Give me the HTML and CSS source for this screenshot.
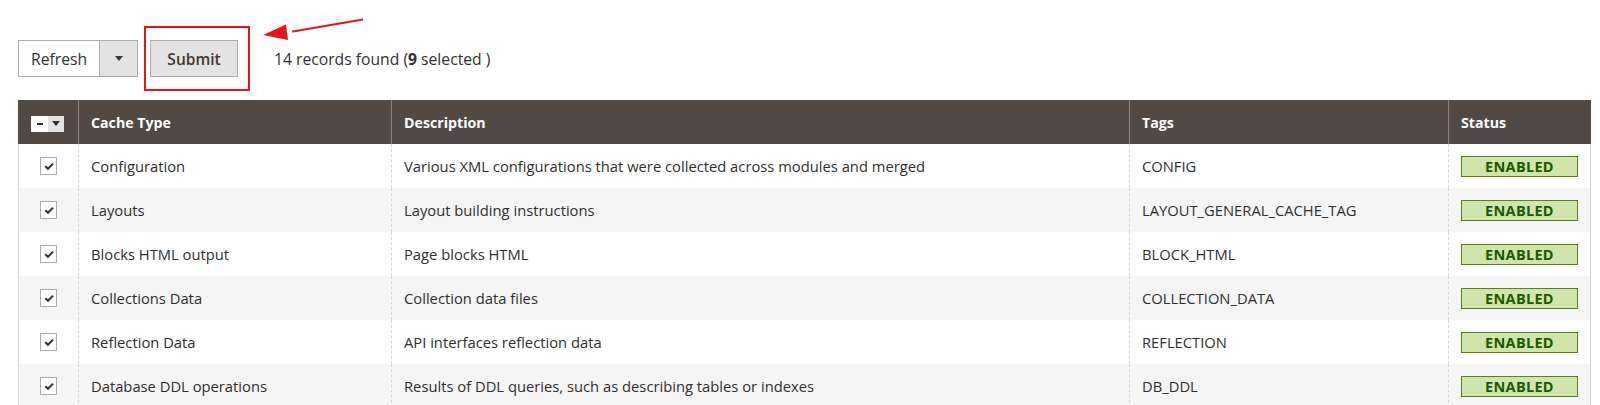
FILE: index.html
```html
<!DOCTYPE html>
<html>
<head>
<meta charset="utf-8">
<link rel="stylesheet" href="styles.css">
</head>
<body>
<div class="page">
  <div class="toolbar">
    <div class="action-select">
      <span class="action-label">Refresh</span>
      <span class="action-toggle"><span class="tri"></span></span>
    </div>
    <div class="submit-wrap">
      <button class="btn-submit">Submit</button>
      <span class="highlight"></span>
      <svg class="arrow" width="100" height="30" viewBox="0 0 100 30">
        <line x1="100" y1="1.5" x2="30" y2="13.5" stroke="#e8141c" stroke-width="2.2" stroke-linecap="round"/>
        <polygon points="0,17 23,6.5 25,22" fill="#e8141c"/>
      </svg>
    </div>
    <div class="records">14 records found (<b>9</b> selected )</div>
  </div>

  <table class="grid">
    <colgroup>
      <col class="c-check"><col class="c-type"><col class="c-desc"><col class="c-tags"><col class="c-status">
    </colgroup>
    <thead>
      <tr>
        <th class="th-check"><span class="mass"><span class="mass-box"><span class="dash"></span></span><span class="mass-toggle"><span class="tri"></span></span></span></th>
        <th>Cache Type</th>
        <th>Description</th>
        <th>Tags</th>
        <th>Status</th>
      </tr>
    </thead>
    <tbody>
      <tr>
        <td class="td-check"><span class="cb"><svg viewBox="0 0 12 12" width="12" height="12"><path d="M2.3 6.2 L5 8.8 L10 3.6" fill="none" stroke="#333" stroke-width="2"/></svg></span></td>
        <td>Configuration</td>
        <td>Various XML configurations that were collected across modules and merged</td>
        <td>CONFIG</td>
        <td><span class="badge">ENABLED</span></td>
      </tr>
      <tr>
        <td class="td-check"><span class="cb"><svg viewBox="0 0 12 12" width="12" height="12"><path d="M2.3 6.2 L5 8.8 L10 3.6" fill="none" stroke="#333" stroke-width="2"/></svg></span></td>
        <td>Layouts</td>
        <td>Layout building instructions</td>
        <td>LAYOUT_GENERAL_CACHE_TAG</td>
        <td><span class="badge">ENABLED</span></td>
      </tr>
      <tr>
        <td class="td-check"><span class="cb"><svg viewBox="0 0 12 12" width="12" height="12"><path d="M2.3 6.2 L5 8.8 L10 3.6" fill="none" stroke="#333" stroke-width="2"/></svg></span></td>
        <td>Blocks HTML output</td>
        <td>Page blocks HTML</td>
        <td>BLOCK_HTML</td>
        <td><span class="badge">ENABLED</span></td>
      </tr>
      <tr>
        <td class="td-check"><span class="cb"><svg viewBox="0 0 12 12" width="12" height="12"><path d="M2.3 6.2 L5 8.8 L10 3.6" fill="none" stroke="#333" stroke-width="2"/></svg></span></td>
        <td>Collections Data</td>
        <td>Collection data files</td>
        <td>COLLECTION_DATA</td>
        <td><span class="badge">ENABLED</span></td>
      </tr>
      <tr>
        <td class="td-check"><span class="cb"><svg viewBox="0 0 12 12" width="12" height="12"><path d="M2.3 6.2 L5 8.8 L10 3.6" fill="none" stroke="#333" stroke-width="2"/></svg></span></td>
        <td>Reflection Data</td>
        <td>API interfaces reflection data</td>
        <td>REFLECTION</td>
        <td><span class="badge">ENABLED</span></td>
      </tr>
      <tr>
        <td class="td-check"><span class="cb"><svg viewBox="0 0 12 12" width="12" height="12"><path d="M2.3 6.2 L5 8.8 L10 3.6" fill="none" stroke="#333" stroke-width="2"/></svg></span></td>
        <td>Database DDL operations</td>
        <td>Results of DDL queries, such as describing tables or indexes</td>
        <td>DB_DDL</td>
        <td><span class="badge">ENABLED</span></td>
      </tr>
    </tbody>
  </table>
</div>
</body>
</html>
```

FILE: styles.css
```css
html, body {
  margin: 0;
  padding: 0;
  background: #ffffff;
}
body {
  font-family: "Open Sans", "Liberation Sans", sans-serif;
  font-size: 14px;
  color: #303030;
  overflow: hidden;
}
.page {
  padding: 40px 10px 0 18px;
}
.toolbar {
  display: flex;
  align-items: center;
  height: 37px;
}
.action-select {
  display: flex;
  box-sizing: border-box;
  width: 120px;
  height: 37px;
  border: 1px solid #adadad;
  background: #fff;
}
.action-label {
  flex: 1;
  display: flex;
  align-items: center;
  padding-left: 12px;
  font-size: 15.7px;
  color: #303030;
}
.action-toggle {
  width: 37px;
  border-left: 1px solid #adadad;
  background: #e3e3e3;
  display: flex;
  align-items: center;
  justify-content: center;
}
.tri {
  width: 0;
  height: 0;
  border-left: 4px solid transparent;
  border-right: 4px solid transparent;
  border-top: 5px solid #41362f;
}
.submit-wrap {
  position: relative;
  margin-left: 12px;
}
.btn-submit {
  display: block;
  box-sizing: border-box;
  width: 88px;
  height: 37px;
  border: 1px solid #adadad;
  background: #e3e3e3;
  font-family: "Open Sans", "Liberation Sans", sans-serif;
  font-size: 15.5px;
  font-weight: 600;
  color: #41362f;
  padding: 0;
}
.highlight {
  position: absolute;
  left: -6px;
  top: -14px;
  width: 106px;
  height: 65px;
  box-sizing: border-box;
  border: 2px solid #e8141c;
}
.arrow {
  position: absolute;
  left: 113px;
  top: -22px;
}
.records {
  margin-left: 36px;
  font-size: 15.7px;
  color: #303030;
}
.records b {
  font-weight: 700;
}

.grid {
  margin-top: 23px;
  width: 1572px;
  border-collapse: collapse;
  table-layout: fixed;
  border-left: 1px solid #d6d6d6;
  border-right: 1px solid #d6d6d6;
}
.c-check { width: 60px; }
.c-type { width: 313px; }
.c-desc { width: 738px; }
.c-tags { width: 319px; }
.c-status { width: 142px; }

.grid th {
  background: #514943;
  color: #ffffff;
  font-weight: 700;
  font-size: 14.2px;
  text-align: left;
  height: 44px;
  padding: 0 12px;
  box-sizing: border-box;
  border-left: 1px solid #8a837f;
  border-right: 1px solid #8a837f;
}
.grid th:first-child { border-left-color: #514943; }
.grid th:last-child { border-right-color: #514943; }
.grid th.th-check {
  padding: 0 0 0 12px;
}
.mass {
  display: inline-flex;
  vertical-align: middle;
  height: 16px;
}
.mass-box {
  width: 17px;
  background: #fff;
  display: flex;
  align-items: center;
  justify-content: center;
}
.dash {
  width: 6px;
  height: 2px;
  background: #303030;
}
.mass-toggle {
  width: 16px;
  background: #e3e3e3;
  display: flex;
  align-items: center;
  justify-content: center;
}
.mass-toggle .tri {
  border-top-color: #303030;
}

.grid td {
  height: 44px;
  box-sizing: border-box;
  padding: 0 12px;
  border-left: 1px dashed #d6d6d6;
  border-right: 1px dashed #d6d6d6;
  font-size: 14.75px;
  color: #303030;
  white-space: nowrap;
}
.grid tbody tr:nth-child(even) td {
  background: #f5f5f5;
}
.grid td.td-check {
  text-align: center;
  padding: 0 0 3px 0;
}
.cb {
  display: inline-flex;
  align-items: center;
  justify-content: center;
  width: 17px;
  height: 18px;
  box-sizing: border-box;
  border: 1px solid #adadad;
  background: #fff;
  vertical-align: middle;
}
.badge {
  display: block;
  box-sizing: border-box;
  width: 117px;
  height: 21px;
  border: 1px solid #5b8116;
  background: #d0e5a9;
  color: #185b00;
  font-weight: 700;
  font-size: 14.5px;
  line-height: 19px;
  text-align: center;
  letter-spacing: 0.3px;
}
```
